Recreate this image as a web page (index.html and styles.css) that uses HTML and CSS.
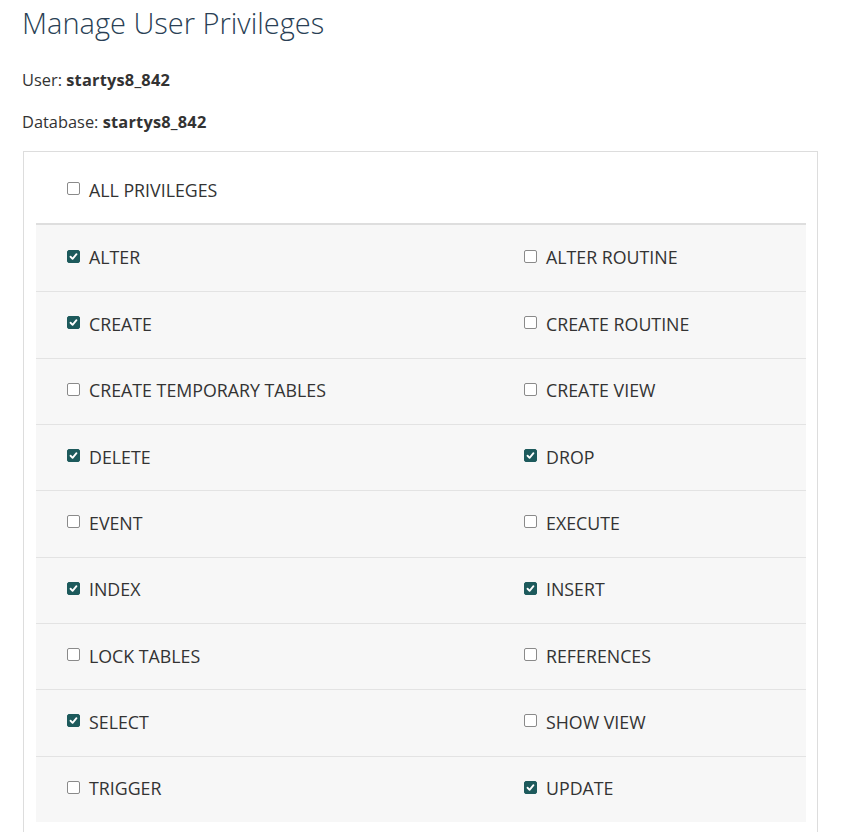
FILE: index.html
```html
<!DOCTYPE html>
<html>
<head>
<meta charset="utf-8">
<link rel="stylesheet" href="styles.css">
</head>
<body>
<h1 class="title">Manage User Privileges</h1>
<p class="meta">User: <b>startys8_842</b></p>
<p class="meta">Database: <b>startys8_842</b></p>
<div class="panel">
  <div class="head">
    <label class="item"><span class="cb"></span>ALL PRIVILEGES</label>
  </div>
  <div class="rows">
    <div class="row">
      <label class="item"><span class="cb on"><svg viewBox="0 0 13 13"><path d="M3 6.8 L5.4 9.2 L10 3.8" /></svg></span>ALTER</label>
      <label class="item"><span class="cb"></span>ALTER ROUTINE</label>
    </div>
    <div class="row">
      <label class="item"><span class="cb on"><svg viewBox="0 0 13 13"><path d="M3 6.8 L5.4 9.2 L10 3.8" /></svg></span>CREATE</label>
      <label class="item"><span class="cb"></span>CREATE ROUTINE</label>
    </div>
    <div class="row">
      <label class="item"><span class="cb"></span>CREATE TEMPORARY TABLES</label>
      <label class="item"><span class="cb"></span>CREATE VIEW</label>
    </div>
    <div class="row">
      <label class="item"><span class="cb on"><svg viewBox="0 0 13 13"><path d="M3 6.8 L5.4 9.2 L10 3.8" /></svg></span>DELETE</label>
      <label class="item"><span class="cb on"><svg viewBox="0 0 13 13"><path d="M3 6.8 L5.4 9.2 L10 3.8" /></svg></span>DROP</label>
    </div>
    <div class="row">
      <label class="item"><span class="cb"></span>EVENT</label>
      <label class="item"><span class="cb"></span>EXECUTE</label>
    </div>
    <div class="row">
      <label class="item"><span class="cb on"><svg viewBox="0 0 13 13"><path d="M3 6.8 L5.4 9.2 L10 3.8" /></svg></span>INDEX</label>
      <label class="item"><span class="cb on"><svg viewBox="0 0 13 13"><path d="M3 6.8 L5.4 9.2 L10 3.8" /></svg></span>INSERT</label>
    </div>
    <div class="row">
      <label class="item"><span class="cb"></span>LOCK TABLES</label>
      <label class="item"><span class="cb"></span>REFERENCES</label>
    </div>
    <div class="row">
      <label class="item"><span class="cb on"><svg viewBox="0 0 13 13"><path d="M3 6.8 L5.4 9.2 L10 3.8" /></svg></span>SELECT</label>
      <label class="item"><span class="cb"></span>SHOW VIEW</label>
    </div>
    <div class="row">
      <label class="item"><span class="cb"></span>TRIGGER</label>
      <label class="item"><span class="cb on"><svg viewBox="0 0 13 13"><path d="M3 6.8 L5.4 9.2 L10 3.8" /></svg></span>UPDATE</label>
    </div>
  </div>
</div>
</body>
</html>
```
FILE: styles.css
```css
html, body {
  margin: 0;
  padding: 0;
  background: #fff;
}
body {
  padding: 0 22px;
  font-family: "Open Sans", "Liberation Sans", sans-serif;
  color: #333;
}
.title {
  margin: 0;
  padding-top: 3px;
  font-size: 29px;
  font-weight: 300;
  line-height: 40px;
  color: #2a3f55;
}
.meta {
  margin: 0;
  font-size: 16.4px;
  line-height: 22px;
}
.title + .meta {
  margin-top: 26px;
}
.meta + .meta {
  margin-top: 20px;
}
.meta b {
  font-weight: 700;
  letter-spacing: 0.2px;
}
.panel {
  margin: 18px 5px 0 1px;
  border: 1px solid #ddd;
  border-bottom: none;
  padding: 0 11px 10px 12px;
  height: 700px;
}
.head {
  height: 63px;
  padding-top: 6px;
  padding-bottom: 2px;
  display: flex;
  align-items: center;
  padding-left: 31px;
  border-bottom: 2px solid #dedede;
}
.rows {
  background: #f7f7f7;
}
.row {
  display: grid;
  grid-template-columns: 457px 1fr;
  height: 66.33px;
  box-sizing: border-box;
  border-top: 1px solid #e3e3e3;
  align-items: center;
  padding-left: 31px;
  padding-bottom: 2px;
}
.row:first-child {
  border-top: none;
}
.item {
  display: flex;
  align-items: center;
  font-size: 17.8px;
  line-height: 24px;
  color: #333;
}
.cb {
  flex: none;
  display: inline-block;
  width: 13px;
  height: 13px;
  box-sizing: border-box;
  border: 1px solid #8a8a8a;
  border-radius: 2px;
  background: #fff;
  margin-right: 9px;
  position: relative;
  top: -1px;
}
.cb.on {
  background: #1d5a5c;
  border-color: #1d5a5c;
}
.cb svg {
  display: block;
  width: 11px;
  height: 11px;
}
.cb svg path {
  fill: none;
  stroke: #fff;
  stroke-width: 2.2;
  stroke-linecap: round;
  stroke-linejoin: round;
}
```
